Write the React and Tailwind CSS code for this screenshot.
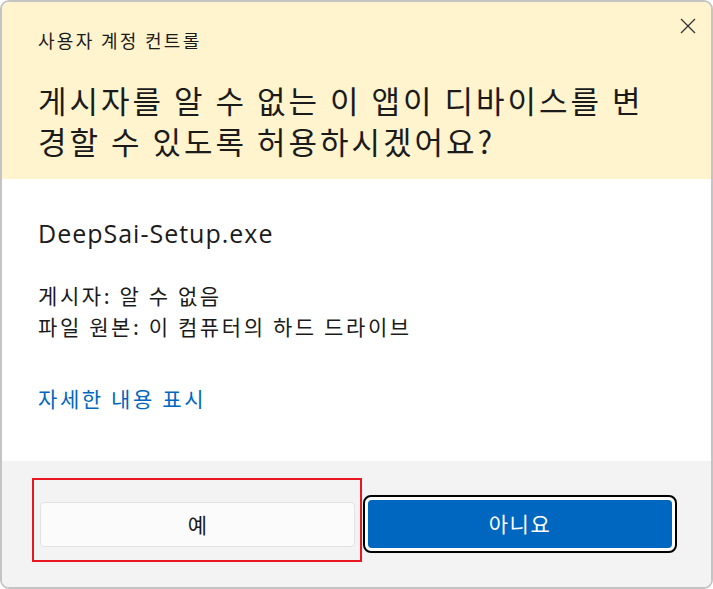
export default function App() {
  const font = { fontFamily: '"Noto Sans CJK KR", "Noto Sans", sans-serif' };

  return (
    <div className="h-[589px] w-[713px] bg-white" style={font}>
      {/* DIALOG */}
      <div className="flex h-full w-full flex-col overflow-hidden rounded-[9px] border-2 border-[#c4c4c4]">
        {/* HEADER */}
        <div className="relative h-[177px] shrink-0 bg-[#fff4ce] pl-[36px] pt-[26px]">
          <p className="text-[18px] leading-[24px] tracking-[2.3px] text-[#1b1b1b]">사용자 계정 컨트롤</p>
          <h1 className="mt-[27px] text-[31px] leading-[41px] tracking-[3px] text-[#1b1b1b]">
            게시자를 알 수 없는 이 앱이 디바이스를 변<br />
            경할 수 있도록 허용하시겠어요?
          </h1>
          <button className="absolute right-[9px] top-[10px] flex h-[28px] w-[28px] items-center justify-center text-[#333]">
            <svg width="16" height="16" viewBox="0 0 16 16" fill="none" stroke="currentColor" strokeWidth="1.3">
              <path d="M1 1 L15 15 M15 1 L1 15" />
            </svg>
          </button>
        </div>

        {/* BODY */}
        <div className="h-[282px] shrink-0 bg-white pl-[36px] pt-[39px]">
          <p className="text-[25px] leading-[30px] tracking-[1px] text-[#1b1b1b]" style={{ fontFamily: '"Open Sans", "Noto Sans CJK KR", sans-serif' }}>
            DeepSai-Setup.exe
          </p>
          <div className="mt-[32px] text-[21px] leading-[31px] tracking-[2.6px] text-[#1b1b1b]">
            <p>게시자: 알 수 없음</p>
            <p>파일 원본: 이 컴퓨터의 하드 드라이브</p>
          </div>
          <p className="mt-[41px] text-[21px] leading-[30px] tracking-[2.6px] text-[#0067c0]">자세한 내용 표시</p>
        </div>

        {/* FOOTER */}
        <div className="flex flex-1 items-start bg-[#f3f3f3] pl-[30px]">
          <div className="mt-[17px] h-[84px] w-[330px] border-2 border-[#e8161e] pb-[13px] pl-[6px] pr-[5px] pt-[22px]">
            <button className="flex h-[45px] w-full items-center justify-center rounded-[4px] border border-[#e2e2e2] bg-[#fbfbfb] text-[21px] text-[#1b1b1b]">
              예
            </button>
          </div>
          <div className="ml-[1px] mt-[34px] h-[58px] w-[314px] rounded-[8px] border-2 border-black bg-white p-[3px]">
            <button className="flex h-full w-full items-center justify-center rounded-[4px] bg-[#0067c0] text-[21px] tracking-[1.5px] text-white">
              아니요
            </button>
          </div>
        </div>
      </div>
    </div>
  );
}
